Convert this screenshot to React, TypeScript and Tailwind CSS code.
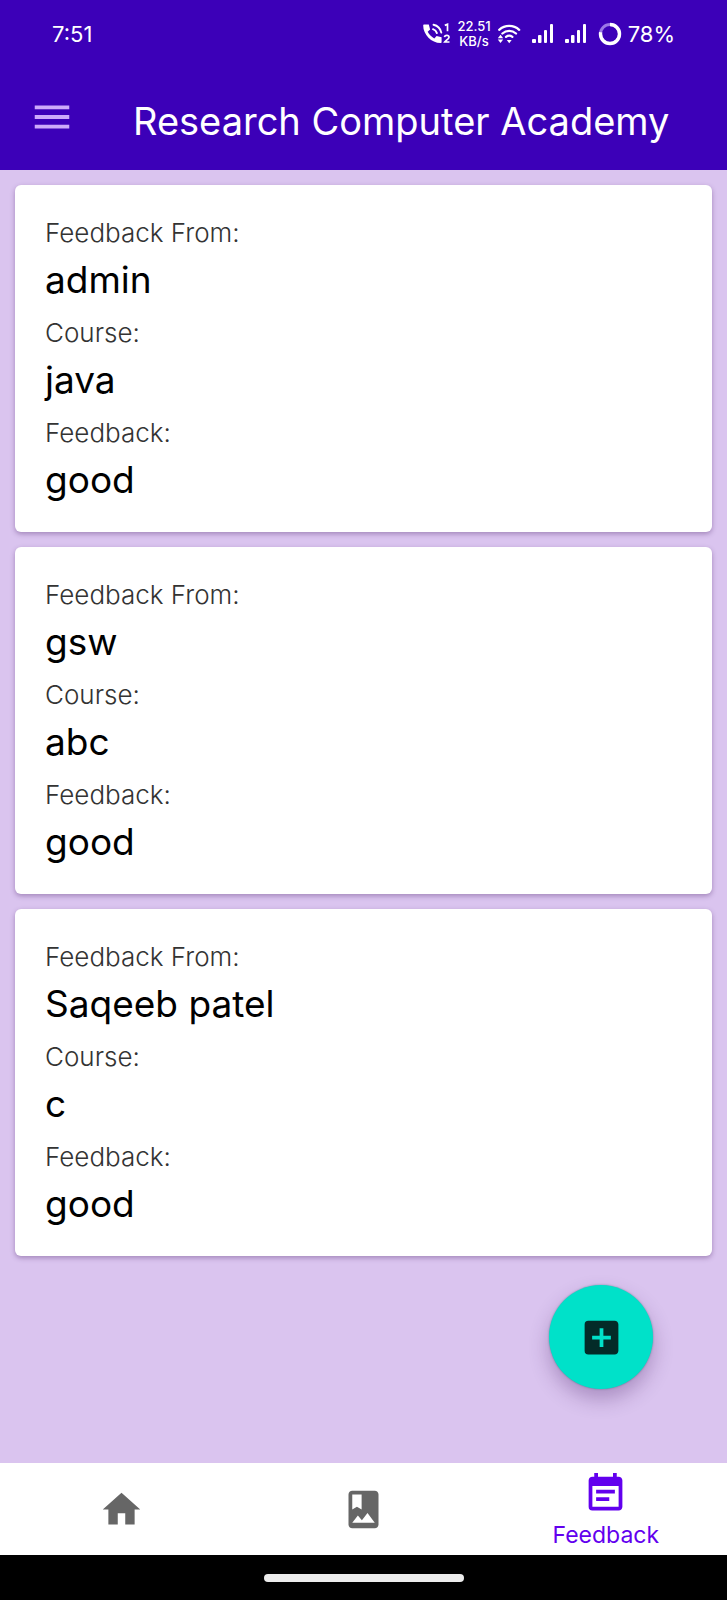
import React from "react";
import { MdAddBox, MdEventNote, MdHome, MdMenu } from "react-icons/md";

type Entry = { from: string; course: string; feedback: string };

const entries: Entry[] = [
  { from: "admin", course: "java", feedback: "good" },
  { from: "gsw", course: "abc", feedback: "good" },
  { from: "Saqeeb patel", course: "c", feedback: "good" },
];

function CallIcon() {
  return (
    <svg width="28" height="22" viewBox="0 0 28 22" fill="none" aria-hidden="true">
      <path
        fill="#fff"
        d="M1.2 1.5h4.6l1.3 5-2.4 2.3c1.5 3 3.6 5.1 6.6 6.6l2.3-2.4 5 1.3v4.7c0 .6-.4 1-1 1C8.5 20 .2 11.7.2 2.5c0-.6.4-1 1-1z"
      />
      <path
        d="M10 6.2c1.9.6 3.3 2 3.9 3.9M10.5 1.8c4 .9 6.9 3.8 7.8 7.8"
        stroke="#fff"
        strokeWidth="1.9"
        strokeLinecap="round"
      />
      <path
        d="M21.8 2.4l2.7-1.1v7M21.5 14.2c.3-2.5 4.8-2.3 4.5.1-.2 1.6-3.3 3.2-4.3 4.700h4.8"
        stroke="#fff"
        strokeWidth="1.7"
      />
    </svg>
  );
}

function WifiIcon() {
  return (
    <svg width="24" height="20" viewBox="0 0 24 20" fill="none" aria-hidden="true">
      <path
        d="M2.2 5.8c5.7-5.2 14.3-5.2 20 0M5.4 9.5c4-3.5 9.6-3.5 13.6 0M9 12.8c2-1.5 4.4-1.5 6.4 0"
        stroke="#fff"
        strokeWidth="2.3"
        strokeLinecap="round"
      />
      <path fill="#fff" d="M9.8 16h4.9l-2.5 3.2zM.8 14.2l2.7-3.5 2.7 3.5zM.8 15.6h5.4l-2.7 3.5z" />
    </svg>
  );
}

function SignalIcon() {
  return (
    <svg width="22" height="20" viewBox="0 0 22 20" fill="#fff" aria-hidden="true">
      <rect x="0" y="15" width="4" height="4" rx="1" />
      <rect x="6" y="11" width="3.5" height="8" rx="1" />
      <rect x="12" y="6" width="3" height="13" rx="1" />
      <rect x="18" y="0" width="3" height="19" rx="1" />
    </svg>
  );
}

function BatteryIcon() {
  return (
    <svg width="24" height="24" viewBox="0 0 24 24" fill="none" aria-hidden="true">
      <circle cx="12" cy="12" r="9.5" stroke="#9c78e6" strokeWidth="3" />
      <circle
        cx="12"
        cy="12"
        r="9.5"
        stroke="#fff"
        strokeWidth="3.4"
        pathLength={100}
        strokeDasharray="78 22"
        transform="rotate(-90 12 12)"
      />
    </svg>
  );
}

function AlbumIcon() {
  return (
    <svg width="45" height="45" viewBox="0 0 24 24" fill="currentColor" aria-hidden="true">
      <path d="M18 2H6c-1.1 0-2 .9-2 2v16c0 1.1.9 2 2 2h12c1.1 0 2-.9 2-2V4c0-1.1-.9-2-2-2zM6 4h5v8l-2.5-1.5L6 12V4zm0 15l3-3.86 2.14 2.58 3-3.86L18 19H6z" />
    </svg>
  );
}

function StatusBar() {
  return (
    <div className="flex h-[68px] items-center justify-between px-[52px] text-[22px] text-white">
      <span>7:51</span>
      <div className="flex items-center">
        <CallIcon />
        <div className="ml-[6px] text-center text-[13px] leading-[15px] font-medium">
          <div>22.51</div>
          <div>KB/s</div>
        </div>
        <div className="ml-[6px] flex items-center gap-[11px]">
          <WifiIcon />
          <SignalIcon />
          <SignalIcon />
          <BatteryIcon />
        </div>
        <span className="ml-[6px]">78%</span>
      </div>
    </div>
  );
}

function Field({ label, value }: { label: string; value: string }) {
  return (
    <div>
      <dt className="text-[26px] leading-[36px] font-light text-[#333]">{label}</dt>
      <dd className="text-[37px] leading-[58px] font-normal text-black">{value}</dd>
    </div>
  );
}

function FeedbackCard({ entry }: { entry: Entry }) {
  return (
    <li className="rounded-md bg-white px-[30px] pt-[30px] pb-[23px] shadow-[0_2px_5px_rgba(60,20,90,0.35)]">
      <dl className="flex flex-col gap-[6px]">
        <Field label="Feedback From:" value={entry.from} />
        <Field label="Course:" value={entry.course} />
        <Field label="Feedback:" value={entry.feedback} />
      </dl>
    </li>
  );
}

export default function App() {
  return (
    <div className="flex min-h-screen flex-col bg-[#dac4ef] font-['Inter',sans-serif]">
      <header className="bg-[#3c00b8]">
        <StatusBar />
        <div className="flex h-[102px] items-center pb-[4px] pl-[29px]">
          <button type="button" aria-label="Open menu" className="text-[#cdaafb]">
            <MdMenu size={46} />
          </button>
          <h1 className="ml-[58px] pt-[8px] text-[38px] leading-[46px] font-normal whitespace-nowrap text-white">
            Research Computer Academy
          </h1>
        </div>
      </header>

      <main className="relative flex-1 p-[15px]">
        <ul className="flex flex-col gap-[15px]">
          {entries.map((entry) => (
            <FeedbackCard key={entry.from} entry={entry} />
          ))}
        </ul>
        <button
          type="button"
          aria-label="Add feedback"
          className="absolute right-[74px] bottom-[74px] flex size-[104px] items-center justify-center rounded-full bg-[#00e1c9] text-[#032b28] shadow-[0_10px_20px_rgba(60,20,90,0.3),0_0_2px_rgba(0,90,90,0.5)]"
        >
          <MdAddBox size={45} />
        </button>
      </main>

      <nav className="grid h-[92px] grid-cols-3 bg-white text-[#666]">
        <a href="#home" aria-label="Home" className="flex items-center justify-center">
          <MdHome size={45} />
        </a>
        <a href="#album" aria-label="Album" className="flex items-center justify-center">
          <AlbumIcon />
        </a>
        <a href="#feedback" aria-current="page" className="flex flex-col items-center pt-[8px] text-[#6200ee]">
          <MdEventNote size={45} />
          <span className="text-[23px] leading-[38px] font-normal">Feedback</span>
        </a>
      </nav>
      <div className="flex h-[45px] items-center justify-center bg-black">
        <div className="h-[8px] w-[200px] rounded-full bg-[#ececec]" />
      </div>
    </div>
  );
}
